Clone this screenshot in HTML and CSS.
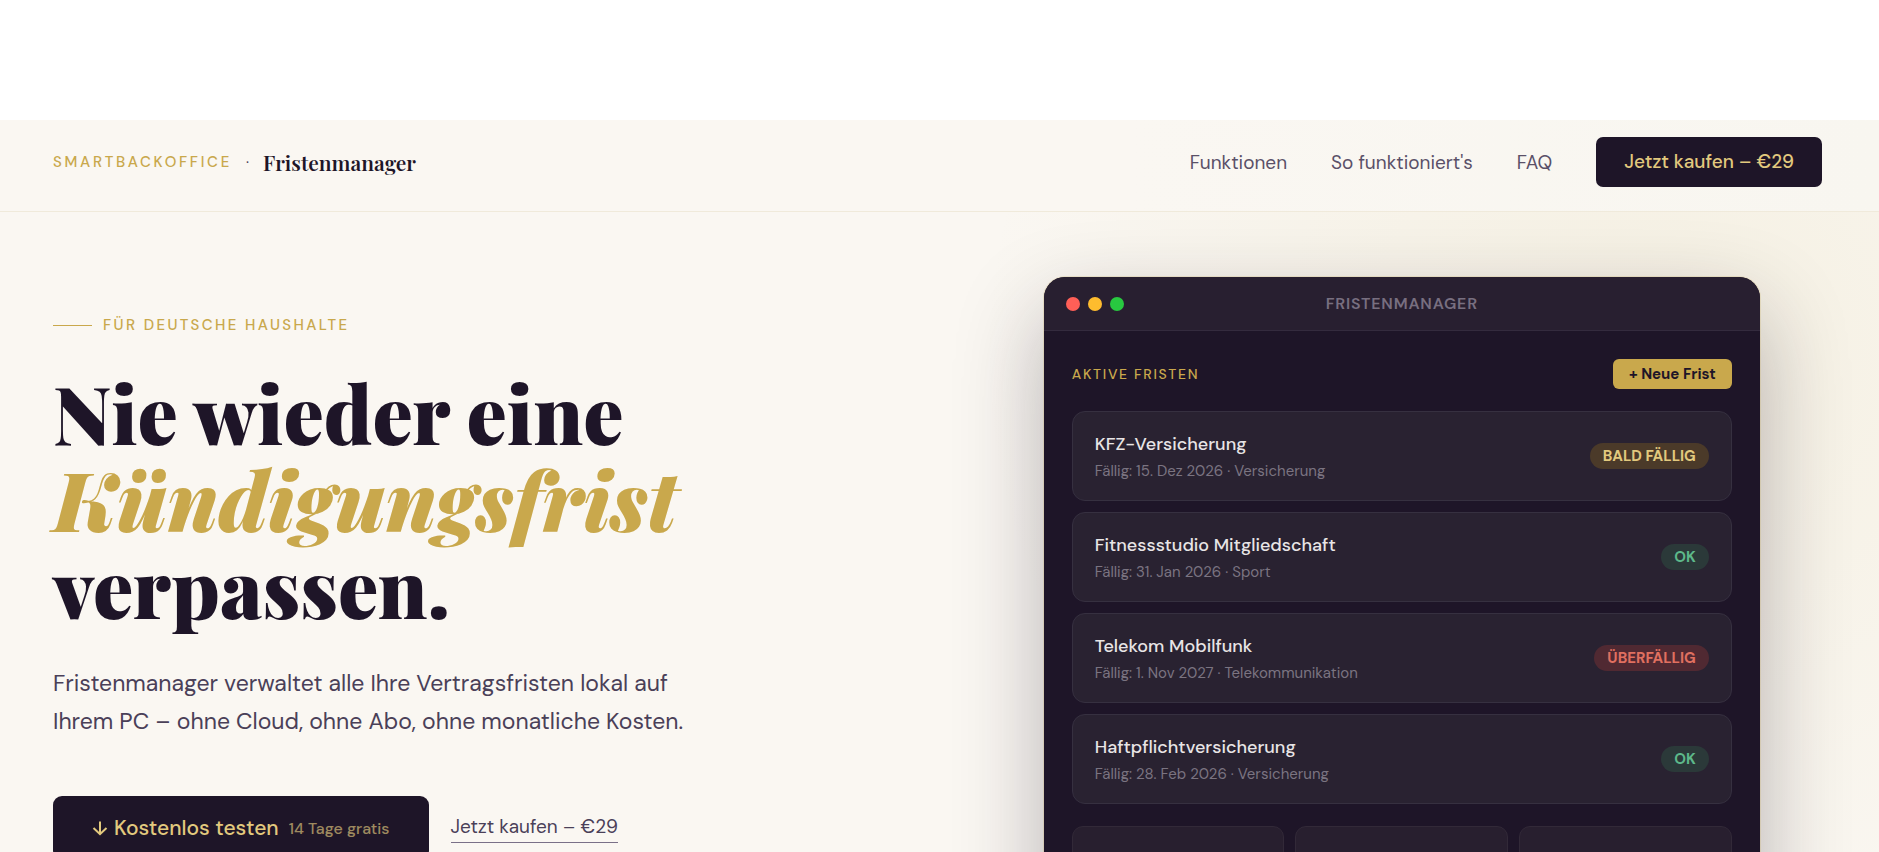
FILE: index.html
```
<!DOCTYPE html>
<html lang="de">
<head>
    <meta charset="UTF-8">
    <meta name="viewport" content="width=device-width, initial-scale=1.0">
    <title>Fristenmanager – SmartBackoffice</title>
    <link rel="stylesheet" href="styles.css">
</head>
<body>
    <nav class="nav">
        <a href="#" class="nav-brand">
            <span class="brand-parent">SmartBackoffice</span>
            <span class="brand-dot">·</span>
            <span class="brand-name">Fristenmanager</span>
        </a>
        <div class="nav-links">
            <a href="#funktionen">Funktionen</a>
            <a href="#ablauf">So funktioniert's</a>
            <a href="#faq">FAQ</a>
            <a href="#kaufen" class="nav-cta">Jetzt kaufen – €29</a>
        </div>
    </nav>

    <main class="hero">
        <section class="hero-text">
            <div class="eyebrow">Für deutsche Haushalte</div>
            <h1>Nie wieder eine <em>Kündigungsfrist</em> verpassen.</h1>
            <p class="hero-sub">Fristenmanager verwaltet alle Ihre Vertragsfristen lokal auf Ihrem PC – ohne Cloud, ohne Abo, ohne monatliche Kosten.</p>
            <div class="hero-actions">
                <a href="#download" class="btn-primary">
                    <svg class="arrow" viewBox="0 0 16 16" aria-hidden="true"><path d="M8 1.5V14M1.5 8 8 14.2 14.5 8"/></svg>
                    Kostenlos testen
                    <small>14 Tage gratis</small>
                </a>
                <a href="#kaufen" class="btn-link">Jetzt kaufen – €29</a>
            </div>
        </section>

        <!-- App-Vorschau -->
        <section class="app">
            <header class="app-bar">
                <div class="dots">
                    <span class="dot red"></span>
                    <span class="dot yellow"></span>
                    <span class="dot green"></span>
                </div>
                <div class="app-title">Fristenmanager</div>
            </header>
            <div class="app-body">
                <div class="app-head">
                    <h2>Aktive Fristen</h2>
                    <button type="button" class="btn-add">+ Neue Frist</button>
                </div>
                <ul class="list">
                    <li class="item">
                        <div>
                            <div class="item-name">KFZ-Versicherung</div>
                            <div class="item-meta">Fällig: 15. Dez 2026 · Versicherung</div>
                        </div>
                        <span class="badge soon">Bald fällig</span>
                    </li>
                    <li class="item">
                        <div>
                            <div class="item-name">Fitnessstudio Mitgliedschaft</div>
                            <div class="item-meta">Fällig: 31. Jan 2026 · Sport</div>
                        </div>
                        <span class="badge ok">OK</span>
                    </li>
                    <li class="item">
                        <div>
                            <div class="item-name">Telekom Mobilfunk</div>
                            <div class="item-meta">Fällig: 1. Nov 2027 · Telekommunikation</div>
                        </div>
                        <span class="badge late">Überfällig</span>
                    </li>
                    <li class="item">
                        <div>
                            <div class="item-name">Haftpflichtversicherung</div>
                            <div class="item-meta">Fällig: 28. Feb 2026 · Versicherung</div>
                        </div>
                        <span class="badge ok">OK</span>
                    </li>
                </ul>
                <div class="stats">
                    <div class="stat"></div>
                    <div class="stat"></div>
                    <div class="stat"></div>
                </div>
            </div>
        </section>
    </main>
</body>
</html>
```

FILE: styles.css
```
:root {
    --ink: #1e1528;
    --ink-soft: #4a4058;
    --gold: #c9a84c;
    --gold-light: #e2c97e;
    --cream: #faf7f2;
}

* {
    box-sizing: border-box;
    margin: 0;
    padding: 0;
}

body {
    font-family: "DM Sans", Inter, sans-serif;
    background: #fff;
    color: var(--ink);
    padding-top: 120px;
}

a {
    color: inherit;
    text-decoration: none;
}

/* Navigation */
.nav {
    display: flex;
    justify-content: space-between;
    align-items: center;
    padding: 17px 57px 24px 53px;
    background: linear-gradient(90deg, var(--cream) 60%, #f8f6f0);
    border-bottom: 1px solid #f0eadb;
}

.nav-brand {
    display: flex;
    align-items: center;
    gap: 14px;
}

.brand-parent {
    font-size: 15px;
    font-weight: 500;
    letter-spacing: 0.18em;
    text-transform: uppercase;
    color: var(--gold);
}

.brand-dot {
    font-size: 15px;
    color: var(--ink-soft);
}

.brand-name {
    font-family: "Playfair Display", "Liberation Serif", serif;
    font-size: 21px;
    font-weight: 600;
    line-height: 24px;
}

.nav-links {
    display: flex;
    align-items: center;
    gap: 44px;
    font-size: 19px;
    color: #5a5068;
}

.nav-cta {
    padding: 0 28px;
    line-height: 50px;
    border-radius: 7px;
    background: var(--ink);
    color: var(--gold-light);
    font-weight: 500;
}

/* Hero */
.hero {
    display: grid;
    grid-template-columns: 1fr 1fr;
    gap: 88px;
    align-items: start;
    padding: 65px 57px 65px 53px;
    background: radial-gradient(ellipse 36% 80% at 88% 18%, rgba(205, 185, 100, 0.11), rgba(205, 185, 100, 0)) var(--cream);
}

.hero-text {
    padding-top: 36px;
}

.eyebrow {
    display: flex;
    align-items: center;
    gap: 11px;
    font-size: 15px;
    font-weight: 500;
    line-height: 24px;
    letter-spacing: 0.16em;
    text-transform: uppercase;
    color: var(--gold);
}

.eyebrow::before {
    content: "";
    width: 39px;
    height: 1px;
    background: var(--gold);
}

h1 {
    margin-top: 31px;
    font-family: "Playfair Display", "Liberation Serif", serif;
    font-size: 80px;
    font-weight: 900;
    line-height: 87px;
}

h1 em {
    display: block;
    font-size: 82px;
    color: var(--gold);
}

.hero-sub {
    max-width: 660px;
    margin-top: 35px;
    font-size: 23px;
    line-height: 38px;
    color: var(--ink-soft);
}

.hero-actions {
    display: flex;
    align-items: center;
    gap: 22px;
    margin-top: 56px;
}

.btn-primary {
    display: flex;
    align-items: center;
    gap: 6px;
    height: 64px;
    padding: 0 39px;
    border-radius: 9px;
    background: var(--ink);
    color: var(--gold-light);
    font-size: 21px;
    font-weight: 500;
}

.btn-primary small {
    margin-left: 4px;
    font-size: 16px;
    opacity: 0.65;
}

.arrow {
    width: 16px;
    height: 16px;
    fill: none;
    stroke: currentColor;
    stroke-width: 2;
}

.btn-link {
    padding-bottom: 2px;
    border-bottom: 1px solid #7a7088;
    font-size: 19px;
    line-height: 26px;
    color: var(--ink-soft);
}

/* App-Vorschau */
.app {
    justify-self: center;
    width: 100%;
    max-width: 716px;
    border-radius: 21px;
    overflow: hidden;
    background: var(--ink);
    box-shadow: 0 0 0 1px rgba(201, 168, 76, 0.2), 0 35px 88px rgba(30, 21, 40, 0.3);
}

.app-bar {
    display: grid;
    grid-template-columns: 1fr auto 1fr;
    align-items: center;
    height: 54px;
    padding: 0 22px;
    background: #281f30;
    border-bottom: 1px solid #342b3e;
}

.dots {
    display: flex;
    gap: 8px;
}

.dot {
    width: 14px;
    height: 14px;
    border-radius: 50%;
}

.dot.red { background: #ff5f57; }
.dot.yellow { background: #febc2e; }
.dot.green { background: #28c840; }

.app-title {
    font-size: 16px;
    font-weight: 600;
    letter-spacing: 0.05em;
    text-transform: uppercase;
    color: #786f80;
}

.app-body {
    padding: 28px;
}

.app-head {
    display: flex;
    justify-content: space-between;
    align-items: center;
    margin-bottom: 22px;
}

.app-head h2 {
    font-size: 14px;
    font-weight: 500;
    letter-spacing: 0.12em;
    text-transform: uppercase;
    color: var(--gold);
}

.btn-add {
    height: 30px;
    padding: 0 16px;
    border: none;
    border-radius: 6px;
    background: var(--gold);
    color: var(--ink);
    font-family: inherit;
    font-size: 15px;
    font-weight: 700;
    cursor: pointer;
}

.list {
    display: grid;
    gap: 11px;
    list-style: none;
}

.item {
    display: flex;
    justify-content: space-between;
    align-items: center;
    height: 90px;
    padding: 0 22px;
    border: 1px solid #363040;
    border-radius: 13px;
    background: #292231;
}

.item-name {
    font-size: 18px;
    font-weight: 500;
    line-height: 30px;
    color: #e8e5e6;
}

.item-meta {
    font-size: 15px;
    line-height: 24px;
    color: #7b7481;
}

.badge {
    padding: 0 13px;
    border-radius: 13px;
    font-size: 15px;
    font-weight: 700;
    line-height: 26px;
    text-transform: uppercase;
}

.badge.soon {
    background: #4b3a29;
    color: #e2c97e;
}

.badge.ok {
    background: #2b3939;
    color: #5db88a;
}

.badge.late {
    background: #502932;
    color: #e07060;
}

.stats {
    display: grid;
    grid-template-columns: repeat(3, 1fr);
    gap: 11px;
    margin-top: 22px;
}

.stat {
    height: 90px;
    border: 1px solid #322938;
    border-radius: 11px;
    background: #281f2f;
}
```
